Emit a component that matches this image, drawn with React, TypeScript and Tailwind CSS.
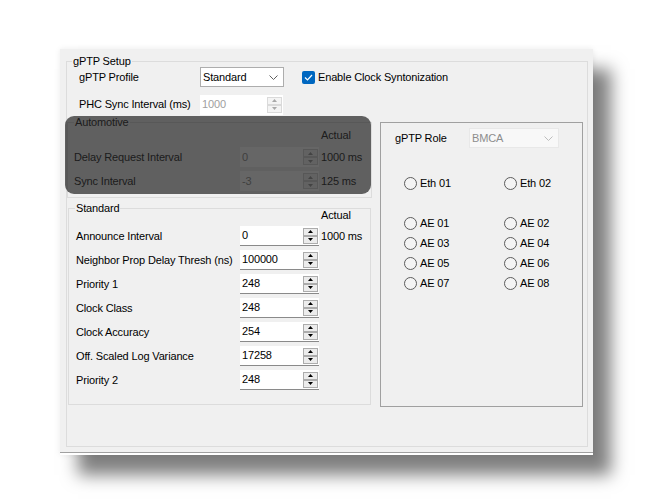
import React from "react";

function Legend({ children, className = "" }: { children: React.ReactNode; className?: string }) {
  return (
    <div className={`-mt-[7px] h-[13px] w-fit bg-[#f0f0f0] px-px leading-[13px] ${className}`}>{children}</div>
  );
}

function Tri({ up, color }: { up?: boolean; color: string }) {
  return (
    <svg width="5" height="3" viewBox="0 0 5 3">
      <path d={up ? "M0 3L2.5 0L5 3Z" : "M0 0L2.5 3L5 0Z"} fill={color} />
    </svg>
  );
}

function SpinBtn({ up, disabled }: { up?: boolean; disabled?: boolean }) {
  return (
    <div
      className={`flex h-[8px] w-[15px] items-center justify-center border ${
        disabled ? "border-[#dadada] bg-[#f4f4f4]" : "border-[#acacac] bg-[#ececec]"
      }`}
    >
      <Tri up={up} color={disabled ? "#a8a8a8" : "#000000"} />
    </div>
  );
}

function Spin({ value, disabled = false, width = "w-[79px]" }: { value: string; disabled?: boolean; width?: string }) {
  return (
    <div className={`flex h-[20px] ${width} items-center bg-white ${disabled ? "" : "border-b border-[#8a8a8a]"}`}>
      <span className={`flex-1 pl-[2px] ${disabled ? "text-[#a0a0a0]" : ""}`}>{value}</span>
      <div className="mr-[1px] flex flex-col">
        <SpinBtn up disabled={disabled} />
        <SpinBtn disabled={disabled} />
      </div>
    </div>
  );
}

function Chevron({ color }: { color: string }) {
  return (
    <svg width="9" height="5" viewBox="0 0 9 5">
      <path d="M0.5 0.5L4.5 4.5L8.5 0.5" fill="none" stroke={color} strokeWidth="1" />
    </svg>
  );
}

function Combo({ value, disabled = false, width }: { value: string; disabled?: boolean; width: string }) {
  return (
    <div
      className={`flex h-[20px] ${width} items-center border pl-[2px] pr-[5px] ${
        disabled ? "border-[#e8e8e8] bg-[#f8f8f8] text-[#8d8d8d]" : "border-[#adadad] bg-white"
      }`}
    >
      <span className="flex-1">{value}</span>
      <Chevron color={disabled ? "#bdbdbd" : "#606060"} />
    </div>
  );
}

function Radio({ label }: { label: string }) {
  return (
    <div className="flex h-[20px] items-center gap-[3px]">
      <span className="h-[13px] w-[13px] rounded-full border border-[#5c5c5c] bg-[#f4f4f4]" />
      <span>{label}</span>
    </div>
  );
}

const standardRows: [string, string][] = [
  ["Announce Interval", "0"],
  ["Neighbor Prop Delay Thresh (ns)", "100000"],
  ["Priority 1", "248"],
  ["Clock Class", "248"],
  ["Clock Accuracy", "254"],
  ["Off. Scaled Log Variance", "17258"],
  ["Priority 2", "248"],
];

export default function App() {
  return (
    <div className="h-[503px] w-[653px] overflow-hidden bg-white pl-[60px] pt-[49px] font-['Liberation_Sans',Arial,sans-serif] text-[11px] tracking-[-0.15px] text-black">
      <div className="relative h-[406px] w-[533px] bg-[#f0f0f0] pl-[6px] pt-[12px] shadow-[inset_0_-2px_0_#ffffff,inset_0_-3px_0_#a0a0a0,18px_20px_16px_rgba(0,0,0,0.5),0_0_6px_rgba(0,0,0,0.08)]">
        {/* gPTP Setup */}
        <div className="h-[386px] w-[522px] border border-[#dcdcdc]">
          <Legend className="ml-[5px]">gPTP Setup</Legend>

          <div className="-mt-px flex h-[20px] items-center">
            <span className="w-[133px] pl-[12px]">gPTP Profile</span>
            <Combo value="Standard" width="w-[84px]" />
            <span className="ml-[18px] flex h-[13px] w-[13px] items-center justify-center rounded-[2px] bg-[#0067c0]">
              <svg width="9" height="7" viewBox="0 0 9 7">
                <path d="M1 3.5L3.5 6L8 1" fill="none" stroke="#ffffff" strokeWidth="1.2" />
              </svg>
            </span>
            <span className="ml-[3px]">Enable Clock Syntonization</span>
          </div>

          <div className="mt-[8px] flex h-[19px] items-center">
            <span className="w-[133px] pl-[12px]">PHC Sync Interval (ms)</span>
            <Spin value="1000" disabled width="w-[83px]" />
          </div>

          <div className="mt-[8px] flex items-start">
            <div className="flex flex-col">
              {/* Automotive */}
              <div className="h-[76px] w-[305px] border border-[#dcdcdc] text-[#4a4a4a]">
                <Legend className="ml-[6px]">Automotive</Legend>
                <div className="h-[13px] pl-[253px] leading-[13px]">Actual</div>
                <div className="mt-[5px] flex flex-col gap-[4px]">
                  <div className="flex h-[20px] items-center">
                    <span className="w-[172px] pl-[6px]">Delay Request Interval</span>
                    <Spin value="0" disabled />
                    <span className="ml-[2px]">1000 ms</span>
                  </div>
                  <div className="flex h-[20px] items-center">
                    <span className="w-[172px] pl-[6px]">Sync Interval</span>
                    <Spin value="-3" disabled />
                    <span className="ml-[2px]">125 ms</span>
                  </div>
                </div>
              </div>

              {/* Standard */}
              <div className="ml-px mt-[10px] h-[197px] w-[303px] border border-[#dcdcdc]">
                <Legend className="ml-[6px]">Standard</Legend>
                <div className="-mt-[6px] h-[13px] pl-[252px] leading-[13px]">Actual</div>
                <div className="mt-[4px] flex flex-col gap-[4px]">
                  {standardRows.map(([label, value], i) => (
                    <div key={label} className="flex h-[20px] items-center">
                      <span className="w-[171px] pl-[7px]">{label}</span>
                      <Spin value={value} />
                      {i === 0 && <span className="ml-[2px]">1000 ms</span>}
                    </div>
                  ))}
                </div>
              </div>
            </div>

            {/* gPTP Role */}
            <div className="ml-[8px] h-[285px] w-[203px] border border-[#a0a0a0]">
              <div className="mt-[5px] flex h-[20px] items-center">
                <span className="w-[88px] pl-[14px]">gPTP Role</span>
                <Combo value="BMCA" disabled width="w-[90px]" />
              </div>
              <div className="mt-[25px] grid grid-cols-[100px_100px] pl-[23px]">
                <Radio label="Eth 01" />
                <Radio label="Eth 02" />
              </div>
              <div className="mt-[20px] grid grid-cols-[100px_100px] pl-[23px]">
                {["AE 01", "AE 02", "AE 03", "AE 04", "AE 05", "AE 06", "AE 07", "AE 08"].map((l) => (
                  <Radio key={l} label={l} />
                ))}
              </div>
            </div>
          </div>
        </div>

        {/* dimmed Automotive overlay */}
        <div className="pointer-events-none absolute left-[5px] top-[67px] h-[78px] w-[306px] rounded-[9px] bg-black/60" />
      </div>
    </div>
  );
}
